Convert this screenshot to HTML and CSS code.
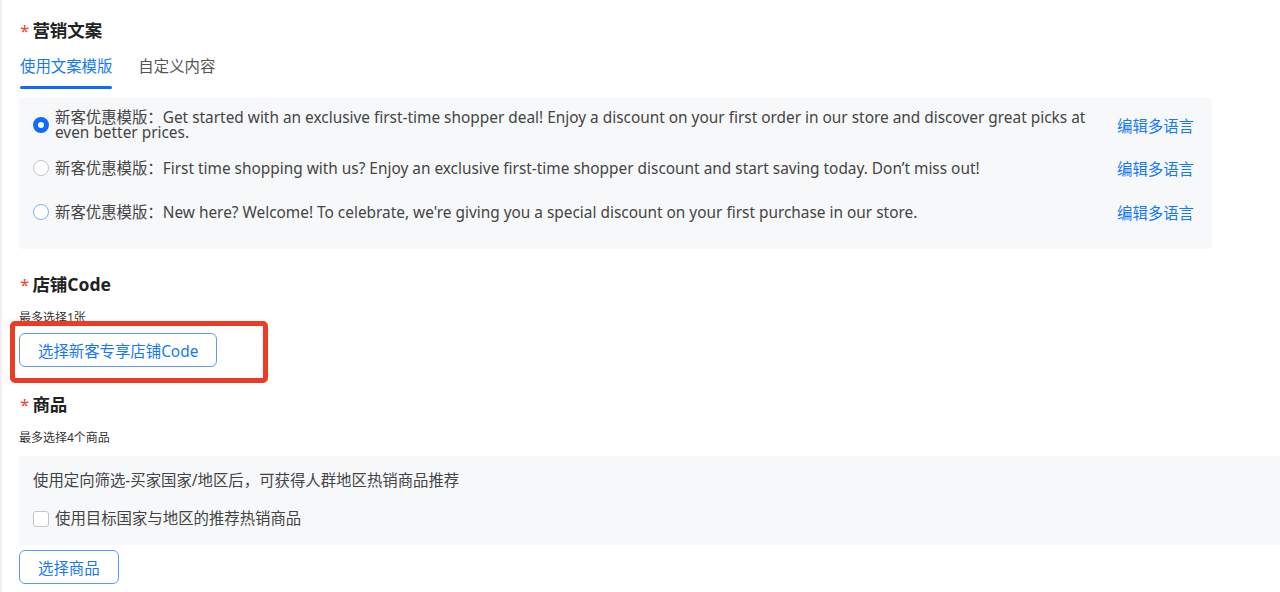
FILE: index.html
```html
<!DOCTYPE html>
<html lang="zh-CN">
<head>
  <meta charset="UTF-8">
  <title>营销文案</title>
  <link rel="stylesheet" href="styles.css">
</head>
<body>
  <div class="page">
    <!-- 营销文案 -->
    <div class="field-title"><span class="req">*</span>营销文案</div>
    <div class="tabs">
      <div class="tab active">使用文案模版</div>
      <div class="tab">自定义内容</div>
    </div>
    <div class="panel templates">
      <div class="option">
        <span class="radio checked"></span>
        <div class="label">新客优惠模版：Get started with an exclusive first-time shopper deal! Enjoy a discount on your first order in our store and discover great picks at even better prices.</div>
        <a class="link">编辑多语言</a>
      </div>
      <div class="option">
        <span class="radio"></span>
        <div class="label">新客优惠模版：First time shopping with us? Enjoy an exclusive first-time shopper discount and start saving today. Don’t miss out!</div>
        <a class="link">编辑多语言</a>
      </div>
      <div class="option">
        <span class="radio hover"></span>
        <div class="label">新客优惠模版：New here? Welcome! To celebrate, we're giving you a special discount on your first purchase in our store.</div>
        <a class="link">编辑多语言</a>
      </div>
    </div>

    <!-- 店铺Code -->
    <div class="field-title section"><span class="req">*</span>店铺Code</div>
    <div class="hint">最多选择1张</div>
    <button class="btn">选择新客专享店铺Code</button>

    <!-- 商品 -->
    <div class="field-title section goods-title"><span class="req">*</span>商品</div>
    <div class="hint">最多选择4个商品</div>
    <div class="panel goods">
      <div class="goods-tip">使用定向筛选-买家国家/地区后，可获得人群地区热销商品推荐</div>
      <label class="check-row"><span class="checkbox"></span>使用目标国家与地区的推荐热销商品</label>
    </div>
    <button class="btn btn-goods">选择商品</button>

    <!-- 标注框 -->
    <div class="mark"></div>
  </div>
</body>
</html>
```

FILE: styles.css
```css
body {
  margin: 0;
  background-color: #fff;
  font-family: "Noto Sans", "Noto Sans CJK SC", sans-serif;
  color: #444;
  overflow: hidden;
}

.page {
  position: relative;
  width: 1280px;
  height: 592px;
  padding: 18px 0 0 17px;
  box-sizing: border-box;
  border-left: 2px solid #f0f0f0;
  overflow: hidden;
}

.field-title {
  font-size: 17.5px;
  font-weight: bold;
  color: #222;
  line-height: 24px;
  padding-left: 1px;
}

.req {
  color: #f5402c;
  font-weight: normal;
  font-size: 17px;
  margin-right: 3px;
}

.section {
  margin-top: 23px;
}

.tabs {
  display: flex;
  gap: 26px;
  margin-top: 14px;
  padding-left: 1px;
}

.tab {
  font-size: 15.4px;
  line-height: 20px;
  padding-bottom: 9px;
  color: #555;
}

.tab.active {
  color: #1677ff;
  position: relative;
}

.tab.active::after {
  content: "";
  position: absolute;
  left: 0;
  right: 0;
  bottom: -3px;
  height: 3px;
  border-radius: 2px;
  background-color: #0f6bff;
}

.panel {
  background-color: #f7f8fa;
  border-radius: 4px;
}

.templates {
  width: 1193px;
  box-sizing: border-box;
  margin-top: 12px;
  padding: 12px 18px 25px 14px;
  display: flex;
  flex-direction: column;
  gap: 16px;
}

.option {
  display: flex;
  align-items: center;
  min-height: 24px;
}

.option:last-child {
  margin-top: 4px;
}

.radio {
  flex: none;
  width: 16px;
  height: 16px;
  box-sizing: border-box;
  border: 1px solid #c2c6cc;
  border-radius: 50%;
  background-color: #fff;
  margin-right: 6px;
}

.radio.checked {
  border: 5px solid #0f6bff;
}

.radio.hover {
  border-color: #7fadf7;
}

.label {
  flex: 1;
  font-size: 15.4px;
  line-height: 15px;
  padding-right: 28px;
}

.link {
  flex: none;
  font-size: 15.4px;
  color: #1677ff;
  cursor: pointer;
}

.hint {
  font-size: 12px;
  line-height: 18px;
  margin-top: 12px;
  color: #333;
}

.btn {
  display: block;
  margin-top: 6px;
  height: 34px;
  padding: 0 18px;
  font-family: inherit;
  font-size: 15.4px;
  color: #1677ff;
  background-color: #fff;
  border: 1px solid #5b9bff;
  border-radius: 6px;
}

.goods-title {
  margin-top: 25px;
}

.goods {
  width: 1300px;
  margin-top: 9px;
  padding: 15px 14px 16px;
  box-sizing: border-box;
}

.goods-tip {
  font-size: 15.4px;
  line-height: 20px;
}

.check-row {
  display: flex;
  align-items: center;
  margin-top: 18px;
  font-size: 15.4px;
  line-height: 20px;
}

.checkbox {
  width: 16px;
  height: 16px;
  box-sizing: border-box;
  border: 1px solid #c2c6cc;
  border-radius: 3px;
  background-color: #fff;
  margin-right: 6px;
}

.btn-goods {
  margin-top: 5px;
}

.mark {
  position: absolute;
  left: 8px;
  top: 321px;
  width: 258px;
  height: 62px;
  box-sizing: border-box;
  border: 5px solid #ee3b24;
  border-radius: 5px;
}
```
